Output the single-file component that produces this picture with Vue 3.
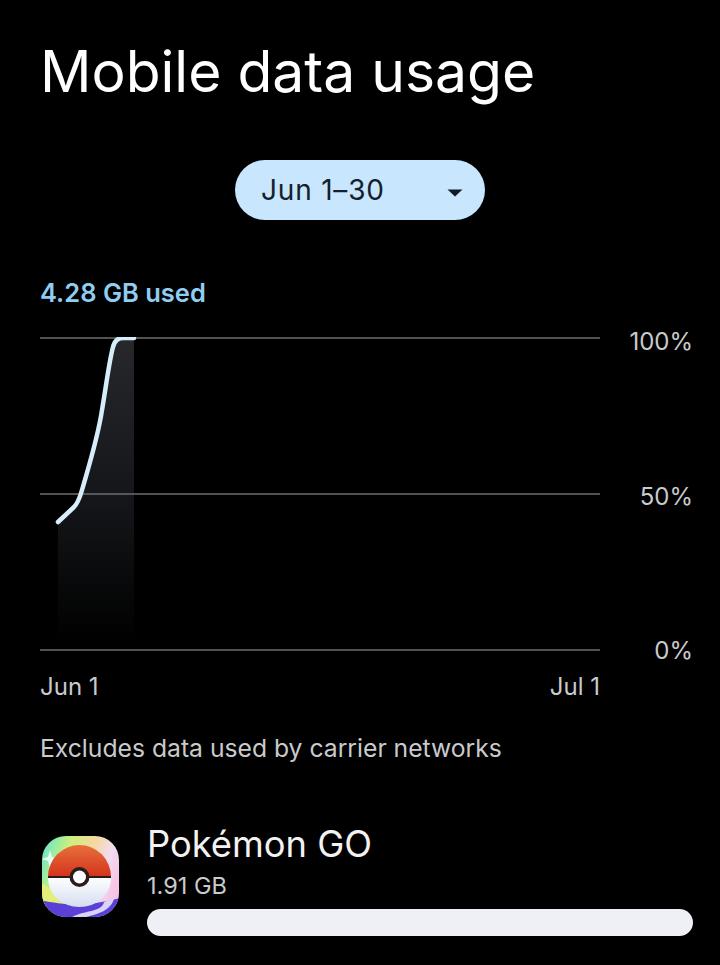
<script setup>
const title = 'Mobile data usage'
</script>

<template>
  <main class="page">
    <h1 class="title">{{ title }}</h1>

    <div class="pill-row">
      <button class="pill">
        <span>Jun 1–30</span>
        <svg class="caret" width="16" height="8" viewBox="0 0 16 8"><path d="M0.5 0.5H15.5L8 7.5Z" fill="#0f1b26" /></svg>
      </button>
    </div>

    <div class="used">4.28 GB used</div>

    <div class="chart">
      <svg class="plot" width="560" height="314" viewBox="0 0 560 314">
        <defs>
          <linearGradient id="fade" x1="0" y1="0" x2="0" y2="1">
            <stop offset="0" stop-color="#26282b" />
            <stop offset="0.55" stop-color="#131518" />
            <stop offset="1" stop-color="#000" />
          </linearGradient>
        </defs>
        <path d="M18 185 L34 170 C38 166 40 160 42 153 C50 125 58 100 62 73 C66 50 69 25 73 10 C75 3 78 1 84 1 L94 1 V306 H18 Z" fill="url(#fade)" />
        <line x1="0" y1="1" x2="560" y2="1" class="grid" />
        <line x1="0" y1="157" x2="560" y2="157" class="grid" />
        <line x1="0" y1="313" x2="560" y2="313" class="grid" />
        <path d="M18 185 L34 170 C38 166 40 160 42 153 C50 125 58 100 62 73 C66 50 69 25 73 10 C75 3 78 1 84 1 L94 1" class="curve" />
      </svg>
      <div class="axis">
        <span>100%</span>
        <span>50%</span>
        <span>0%</span>
      </div>
    </div>

    <div class="dates">
      <span>Jun 1</span>
      <span>Jul 1</span>
    </div>

    <p class="note">Excludes data used by carrier networks</p>

    <div class="app">
      <svg class="app-icon" width="80" height="81" viewBox="0 0 80 81">
        <defs>
          <linearGradient id="rainbow" x1="0" y1="0.1" x2="1" y2="0.5">
            <stop offset="0" stop-color="#58e6d4" />
            <stop offset="0.32" stop-color="#cdf07c" />
            <stop offset="0.58" stop-color="#f6d8a0" />
            <stop offset="0.8" stop-color="#f0dcf0" />
            <stop offset="1" stop-color="#f8c4e6" />
          </linearGradient>
          <linearGradient id="red" x1="0" y1="0" x2="0" y2="1">
            <stop offset="0" stop-color="#e8703c" />
            <stop offset="1" stop-color="#d4321c" />
          </linearGradient>
          <linearGradient id="white" x1="0" y1="0" x2="0" y2="1">
            <stop offset="0" stop-color="#ffffff" />
            <stop offset="1" stop-color="#d4ddf0" />
          </linearGradient>
          <clipPath id="squircle"><rect x="2" y="0" width="77" height="81" rx="24" /></clipPath>
        </defs>
        <g clip-path="url(#squircle)">
          <rect width="80" height="81" fill="url(#rainbow)" />
          <path d="M0 46 L12 54 L20 68 L0 72Z" fill="#e2ee78" />
          <path d="M10 14 L12 21 L19 23 L12 25 L10 32 L8 25 L2 23 L8 21Z" fill="#e8fff8" />
          <path d="M0 64 C20 68 44 72 80 62 V81 H0Z" fill="#5b3fd6" />
          <path d="M32 81 C46 74 62 76 64 66 L74 62 C72 74 58 78 46 81Z" fill="#d8d4f8" />
          <path d="M8 41 A31.5 32 0 0 1 71 41Z" fill="url(#red)" />
          <path d="M8 41 H71 C71 60 56 71 39.5 71 C23 71 8 60 8 41Z" fill="url(#white)" />
          <rect x="8" y="40" width="63" height="2" fill="#2a1a1a" />
          <circle cx="39.5" cy="41" r="10" fill="#2a1c1c" />
          <circle cx="39.5" cy="41" r="6.5" fill="#fff" />
        </g>
      </svg>
      <div class="app-body">
        <div class="app-name">Pokémon GO</div>
        <div class="app-size">1.91 GB</div>
        <div class="bar"></div>
      </div>
    </div>
  </main>
</template>

<style>
html, body { background: #000; margin: 0; }
</style>

<style scoped>
.page {
  box-sizing: border-box;
  width: 720px;
  height: 965px;
  overflow: hidden;
  background: #000;
  color: #e8e9eb;
  padding: 0 27px 0 40px;
  font-family: Inter, "Open Sans", sans-serif;
}
.title {
  margin: 0;
  padding-top: 38px;
  font-size: 57px;
  line-height: 68px;
  font-weight: 400;
  color: #fff;
}
.pill-row {
  display: flex;
  justify-content: center;
  margin-top: 54px;
  padding-right: 13px;
}
.pill {
  box-sizing: border-box;
  width: 250px;
  height: 60px;
  border: 0;
  border-radius: 30px;
  background: #c8e6fd;
  color: #14202c;
  font: inherit;
  font-size: 28px;
  letter-spacing: 0.8px;
  display: flex;
  align-items: center;
  justify-content: space-between;
  padding: 0 22px 0 26px;
}
.caret { margin-top: 6px; }
.used {
  margin-top: 58px;
  font-size: 25.5px;
  line-height: 30px;
  font-weight: 600;
  color: #90cdf0;
}
.chart {
  display: flex;
  margin-top: 29px;
  height: 314px;
}
.plot { display: block; flex: none; }
.grid { stroke: #6e6e6e; stroke-width: 1.5; }
.curve {
  fill: none;
  stroke: #d6eefc;
  stroke-width: 4.5;
  stroke-linecap: round;
  stroke-linejoin: round;
}
.axis {
  flex: 1;
  display: flex;
  flex-direction: column;
  justify-content: space-between;
  align-items: flex-end;
  font-size: 24px;
  line-height: 30px;
  color: #c9cacc;
  margin-top: -10px;
  margin-bottom: -15px;
}
.dates {
  display: flex;
  justify-content: space-between;
  width: 560px;
  margin-top: 21px;
  font-size: 24px;
  line-height: 30px;
  color: #c9cacc;
}
.note {
  margin: 31px 0 0;
  font-size: 24.7px;
  line-height: 30px;
  color: #c9cacc;
}
.app {
  display: flex;
  align-items: flex-start;
  gap: 27px;
  margin-top: 60px;
}
.app-icon { flex: none; margin-top: 13px; }
.app-body { flex: 1; min-width: 0; }
.app-name {
  font-size: 36.3px;
  line-height: 42px;
  color: #f2f2f2;
}
.app-size {
  margin-top: 6px;
  font-size: 23.5px;
  line-height: 30px;
  color: #c9cacc;
}
.bar {
  margin-top: 8px;
  height: 27px;
  border-radius: 14px;
  background: #eef0f5;
}
</style>
